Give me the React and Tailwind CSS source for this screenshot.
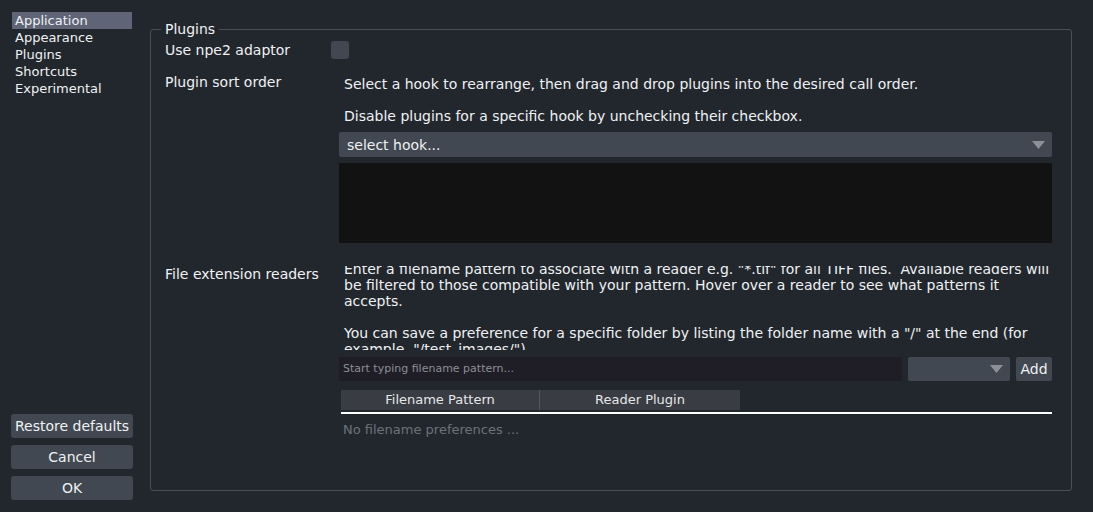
const font = { fontFamily: '"DejaVu Sans", "Liberation Sans", sans-serif' };

function Arrow({ className }) {
  return (
    <svg className={className} width="13" height="8" viewBox="0 0 13 8">
      <polygon points="0,0 13,0 6.5,8" fill="#8d9197" />
    </svg>
  );
}

function SideButton({ children }) {
  return (
    <button className="h-[24px] w-[122px] rounded-[3px] bg-[#414851] text-[14px] text-[#f0f1f2]">
      {children}
    </button>
  );
}

export default function App() {
  const pages = ["Application", "Appearance", "Plugins", "Shortcuts", "Experimental"];

  return (
    <div
      className="flex h-[512px] w-[1093px] bg-[#22272e] text-[14px] leading-[16px] text-[#f0f1f2]"
      style={font}
    >
      {/* sidebar */}
      <div className="flex w-[150px] flex-col pb-[12px]">
        <ul className="ml-[12px] mt-[12px] w-[120px] text-[13px]">
          {pages.map((p, i) => (
            <li
              key={p}
              className={
                "h-[17px] pl-[3px] leading-[17px] " + (i === 0 ? "bg-[#5f6477]" : "")
              }
            >
              {p}
            </li>
          ))}
        </ul>
        <div className="ml-[11px] mt-auto flex flex-col gap-[7px]">
          <SideButton>Restore defaults</SideButton>
          <SideButton>Cancel</SideButton>
          <SideButton>OK</SideButton>
        </div>
      </div>

      {/* main group */}
      <fieldset className="mt-[21px] h-[470px] w-[921px] rounded-[3px] border border-[#4a4f57] pl-[14px] pr-[19px]">
        <legend className="ml-[-4px] px-[4px] leading-[17px]">Plugins</legend>

        <div className="mt-[3px] grid grid-cols-[174px_1fr] items-center">
          <span>Use npe2 adaptor</span>
          <span className="ml-[-8px] block h-[18px] w-[18px] rounded-[3px] bg-[#414851]" />
        </div>

        <div className="mt-[15px] grid grid-cols-[174px_1fr]">
          <span>Plugin sort order</span>
          <div>
            <p className="pl-[5px] pt-[2px]">
              Select a hook to rearrange, then drag and drop plugins into the desired call order.
            </p>
            <p className="mt-[16px] pl-[5px]">Disable plugins for a specific hook by unchecking their checkbox.</p>
            <div className="mt-[8px] flex h-[25px] items-center justify-between rounded-[2px] bg-[#414851] pl-[8px] pr-[7px]">
              <span>select hook...</span>
              <Arrow />
            </div>
            <div className="mt-[6px] h-[80px] rounded-[1px] bg-[#121212]" />
          </div>
        </div>

        <div className="mt-[19px] grid grid-cols-[174px_1fr]">
          <span className="pt-[4px]">File extension readers</span>
          <div>
            <div className="mt-[4px] h-[84px] overflow-hidden pl-[5px]">
              <div className="mt-[-5px] whitespace-pre">
                <div>{'Enter a filename pattern to associate with a reader e.g. "*.tif" for all TIFF files.  Available readers will'}</div>
                <div>be filtered to those compatible with your pattern. Hover over a reader to see what patterns it</div>
                <div>accepts.</div>
                <div>&nbsp;</div>
                <div>{'You can save a preference for a specific folder by listing the folder name with a "/" at the end (for'}</div>
                <div>{'example, "/test_images/").'}</div>
              </div>
            </div>

            <div className="mt-[7px] flex h-[24px] gap-[6px]">
              <div className="flex w-[563px] items-center rounded-[2px] bg-[#1f1d25] pl-[4px] text-[11px] text-[#8b8f96]">
                Start typing filename pattern...
              </div>
              <div className="flex w-[102px] items-center justify-end rounded-[2px] bg-[#414851] pr-[7px]">
                <Arrow />
              </div>
              <button className="w-[36px] rounded-[2px] bg-[#414851] text-[14px] text-[#f0f1f2]">Add</button>
            </div>

            <div className="ml-[2px] mt-[9px] flex h-[20px] w-[399px] items-center bg-[#393c42] text-[13px] text-[#e6e7e9]">
              <div className="w-[199px] border-r border-[#55585e] text-center leading-[20px]">Filename Pattern</div>
              <div className="flex-1 text-center leading-[20px]">Reader Plugin</div>
            </div>
            <div className="ml-[2px] mt-[2px] h-[2px] bg-white" />
            <p className="mt-[8px] pl-[4px] text-[13px] text-[#6d727a]">No filename preferences ...</p>
          </div>
        </div>
      </fieldset>
    </div>
  );
}
